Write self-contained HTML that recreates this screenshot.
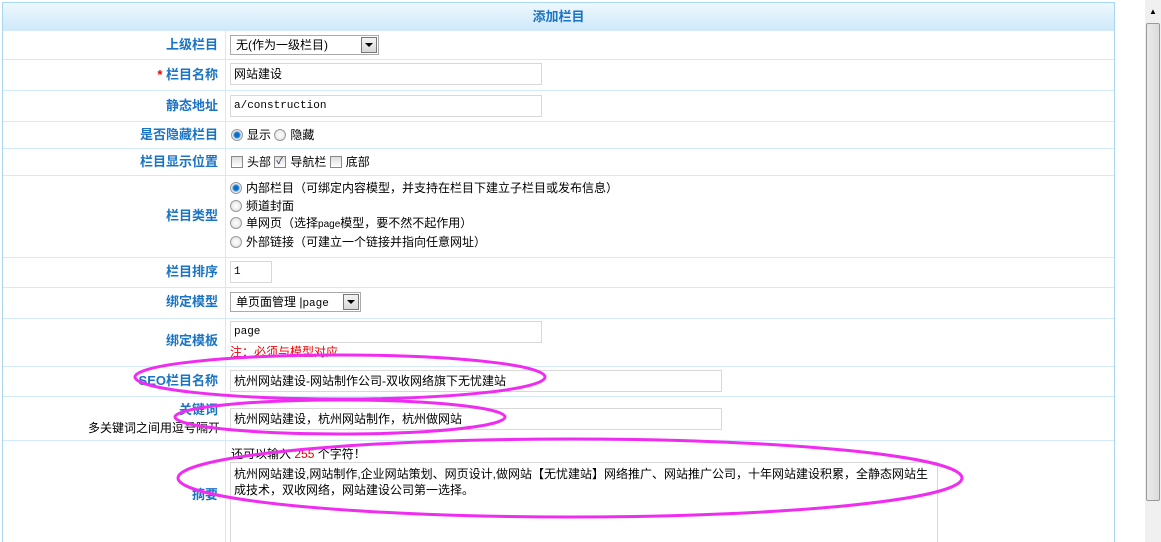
<!DOCTYPE html>
<html><head><meta charset="utf-8"><style>
*{margin:0;padding:0;box-sizing:border-box}
html,body{width:1161px;height:542px;overflow:hidden}
body{background:#fff;font:12px/16px "Liberation Sans","Noto Sans CJK SC",sans-serif;color:#000;position:relative}
.tbl{position:absolute;left:2px;top:2px;width:1113px;border:1px solid #a9d6f5;border-bottom:none;height:540px}
.hd{height:28px;background:linear-gradient(#eef7fd,#cfe9fa);border-bottom:1px solid #a9d6f5;text-align:center;line-height:28px;font-weight:bold;color:#1a74c4;font-size:13px}
.row{position:absolute;left:3px;width:1111px;border-top:1px solid #d4eafa}
.lab{position:absolute;left:0;width:222px;text-align:right;font-weight:bold;color:#1a74c4;font-size:13px;padding-right:4px;line-height:16px}
.vl{position:absolute;left:222px;top:28px;width:1px;height:520px;background:#d4eafa}
.inp{position:absolute;border:1px solid #d8d8d8;background:#fff;height:22px;line-height:20px;padding-left:3px;font-size:12px}
.sel{position:absolute;border:1px solid #aaa;background:#fff;height:20px;line-height:18px;padding-left:5px}
.sel b{position:absolute;right:1px;top:1px;width:16px;height:16px;border:1px solid #777;background:linear-gradient(#f4f4f4,#d8d8d8)}
.sel b:after{content:"";position:absolute;left:3px;top:5px;border:4px solid transparent;border-top:4px solid #000;border-bottom:none}
.t{position:absolute;white-space:nowrap}
.rd{display:inline-block;width:12px;height:12px;border-radius:50%;border:1px solid #999;background:radial-gradient(#fff,#ddd);vertical-align:-2px;margin-right:4px}
.rd.on{background:radial-gradient(#0c6ac8 30%,#5aa6e6 45%,#eee 60%)}
.cb{display:inline-block;width:12px;height:12px;border:1px solid #888;background:linear-gradient(#ddd,#fff);vertical-align:-2px;margin-right:4px;position:relative;overflow:hidden}
.cb i{position:absolute;left:1px;top:-3px;font-style:normal;font-size:11px;line-height:14px;color:#335}
.mono{font-family:"Liberation Mono",monospace;font-size:11px}
.sb{position:absolute;left:1145px;top:0;width:16px;height:542px;background:#f0f0f0}
.th{position:absolute;left:1146px;top:23px;width:14px;height:478px;border:1px solid #999;border-radius:2px;background:linear-gradient(90deg,#eaeaea,#dcdcdc)}
</style></head><body>
<div class="tbl"><div class="hd">添加栏目</div><div class="vl"></div></div>
<div class="row" style="top:30px"></div>
<div class="row" style="top:59px"></div>
<div class="row" style="top:90px"></div>
<div class="row" style="top:121px"></div>
<div class="row" style="top:148px"></div>
<div class="row" style="top:175px"></div>
<div class="row" style="top:257px"></div>
<div class="row" style="top:287px"></div>
<div class="row" style="top:318px"></div>
<div class="row" style="top:366px"></div>
<div class="row" style="top:396px"></div>
<div class="row" style="top:440px"></div>

<div class="lab" style="top:37px">上级栏目</div>
<div class="sel" style="left:230px;top:35px;width:149px">无(作为一级栏目)<b></b></div>
<div class="lab" style="top:67px"><span style="color:#e00">*</span> 栏目名称</div>
<div class="inp" style="left:230px;top:63px;width:312px">网站建设</div>
<div class="lab" style="top:98px">静态地址</div>
<div class="inp mono" style="left:230px;top:95px;width:312px">a/construction</div>
<div class="lab" style="top:127px">是否隐藏栏目</div>
<div class="t" style="left:231px;top:127px"><span class="rd on"></span>显示 <span class="rd"></span>隐藏</div>
<div class="lab" style="top:154px">栏目显示位置</div>
<div class="t" style="left:231px;top:154px"><span class="cb"></span>头部 <span class="cb"><i>✓</i></span>导航栏 <span class="cb"></span>底部</div>
<div class="lab" style="top:208px">栏目类型</div>
<div class="t" style="left:230px;top:180px;line-height:17.5px"><span class="rd on"></span>内部栏目（可绑定内容模型，并支持在栏目下建立子栏目或发布信息）<br><span class="rd"></span>频道封面<br><span class="rd"></span>单网页（选择<span style="font-size:10px">page</span>模型，要不然不起作用）<br><span class="rd"></span>外部链接（可建立一个链接并指向任意网址）</div>
<div class="lab" style="top:264px">栏目排序</div>
<div class="inp mono" style="left:230px;top:261px;width:42px">1</div>
<div class="lab" style="top:294px">绑定模型</div>
<div class="sel" style="left:230px;top:292px;width:131px">单页面管理 |<span class="mono">page</span><b></b></div>
<div class="lab" style="top:333px">绑定模板</div>
<div class="inp mono" style="left:230px;top:321px;width:312px">page</div>
<div class="t" style="left:230px;top:344px;color:#e00">注：必须与模型对应</div>
<div class="lab" style="top:373px">SEO栏目名称</div>
<div class="inp" style="left:230px;top:370px;width:492px">杭州网站建设-网站制作公司-双收网络旗下无忧建站</div>
<div class="lab" style="top:402px">关键词</div>
<div class="t" style="left:88px;top:420px">多关键词之间用逗号隔开</div>
<div class="inp" style="left:230px;top:408px;width:492px">杭州网站建设，杭州网站制作，杭州做网站</div>
<div class="lab" style="top:487px">摘要</div>
<div class="t" style="left:231px;top:446px">还可以输入 <span style="color:#e00">255</span> 个字符！</div>
<div class="inp" style="left:230px;top:462px;width:708px;height:90px;line-height:16px;padding-top:3px;white-space:normal">杭州网站建设,网站制作,企业网站策划、网页设计,做网站【无忧建站】网络推广、网站推广公司，十年网站建设积累，全静态网站生成技术，双收网络，网站建设公司第一选择。</div>

<svg width="1161" height="542" style="position:absolute;left:0;top:0">
<g fill="none" stroke="#f02cf0" stroke-width="3">
<ellipse cx="340" cy="377" rx="205" ry="22"/>
<ellipse cx="340" cy="417" rx="165" ry="17"/>
<ellipse cx="570" cy="478" rx="392" ry="39"/>
</g></svg>
<div class="sb"></div><div class="th"></div>
<div class="t" style="left:1149px;top:4px;font-size:8px">▲</div>
</body></html>
